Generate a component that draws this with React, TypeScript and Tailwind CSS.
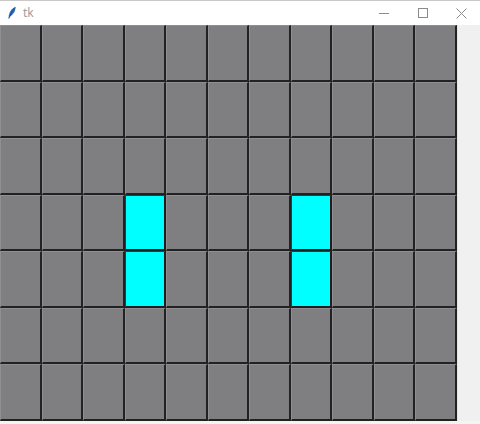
import React from "react";

const ROWS = 7;
const COLS = 11;
const cyan = new Set(["3-3", "4-3", "3-7", "4-7"]);

export default function App() {
  const cells = [];
  for (let r = 0; r < ROWS; r++) {
    for (let c = 0; c < COLS; c++) {
      const on = cyan.has(`${r}-${c}`);
      cells.push(
        <div
          key={`${r}-${c}`}
          className={
            on
              ? "bg-[#00ffff] border-l border-t border-r-2 border-b-2 border-l-[#3a3a3a] border-t-[#3a3a3a] border-r-[#1e1e1e] border-b-[#1e1e1e]"
              : "bg-[#7f7e80] border-l border-t border-r-2 border-b-2 border-l-[#8f8e90] border-t-[#8f8e90] border-r-[#222222] border-b-[#222222]"
          }
        />
      );
    }
  }
  return (
    <div className="w-[480px] h-[424px] bg-white flex flex-col overflow-hidden" style={{ fontFamily: '"Noto Sans", "Liberation Sans", sans-serif' }}>
      <div className="h-[25px] flex items-center bg-white border-t border-[#c8c8c8] shrink-0">
        <div className="w-[22px] flex justify-center pl-[2px]">
          <svg width="10" height="14" viewBox="0 0 10 14">
            <path d="M8.5 0.8 C5.5 2 2.6 5 1.8 9.5 L1.6 12.5 L3 10.5 C6.5 8.5 8.8 5 8.5 0.8 Z" fill="#2f6fc0" />
            <path d="M8 1.5 C6 4 4 7 1.8 12.6" stroke="#1b3f78" strokeWidth="0.8" fill="none" />
          </svg>
        </div>
        <span className="text-[12px] text-[#a0a0a0] ml-[1px] leading-none">tk</span>
        <div className="flex-1" />
        <div className="w-[38px] h-full flex items-center justify-center">
          <svg width="10" height="10" viewBox="0 0 10 10">
            <line x1="0" y1="5.5" x2="10" y2="5.5" stroke="#8a8a8a" strokeWidth="1" />
          </svg>
        </div>
        <div className="w-[39px] h-full flex items-center justify-center">
          <svg width="10" height="10" viewBox="0 0 10 10">
            <rect x="0.5" y="0.5" width="9" height="9" fill="none" stroke="#8a8a8a" strokeWidth="1" />
          </svg>
        </div>
        <div className="w-[38px] h-full flex items-center justify-center">
          <svg width="11" height="11" viewBox="0 0 11 11">
            <line x1="0.5" y1="0.5" x2="10.5" y2="10.5" stroke="#8a8a8a" strokeWidth="1" />
            <line x1="10.5" y1="0.5" x2="0.5" y2="10.5" stroke="#8a8a8a" strokeWidth="1" />
          </svg>
        </div>
      </div>
      <div className="flex h-[396px] shrink-0">
        <div className="w-[457px] h-[396px] grid grid-cols-[repeat(11,41.5px)] grid-rows-[repeat(7,56.5px)] bg-[#222222]">
          {cells}
        </div>
        <div className="flex-1 bg-[#f0f0f0] border-l border-[#e4e4e4]" />
      </div>
      <div className="flex-1 bg-[#f4f4f4]" />
    </div>
  );
}
